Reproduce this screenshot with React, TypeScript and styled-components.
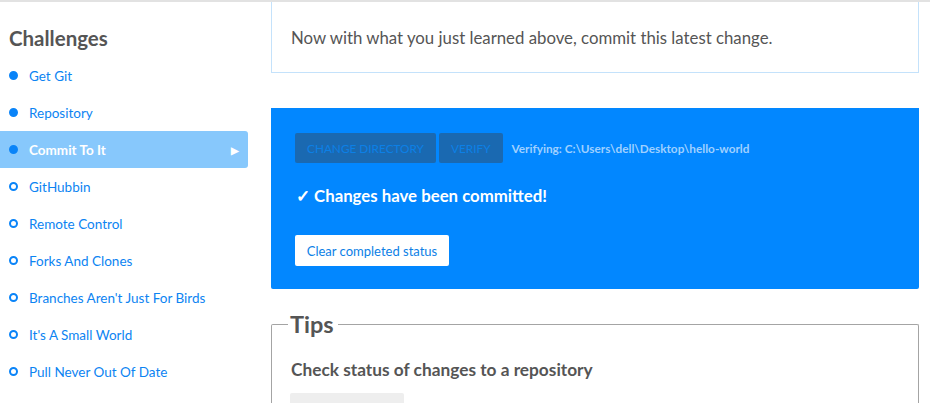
import React from 'react';
import styled, { createGlobalStyle } from 'styled-components';

const GlobalStyle = createGlobalStyle`
    html, body {
        margin: 0;
        padding: 0;
        background: #fff;
        font-family: Lato, "Noto Sans", sans-serif;
        overflow: hidden;
    }
`

const Page = styled.div`
    width: 930px;
    height: 403px;
    border-top: 2px solid #e2e2e2;
    box-sizing: border-box;
    display: flex;
    align-items: flex-start;
`

const Sidebar = styled.nav`
    width: 248px;
    flex-shrink: 0;
    padding-top: 24px;
`

const SideTitle = styled.h2`
    margin: 0 0 0 9px;
    height: 31px;
    font-size: 20.5px;
    font-weight: 700;
    color: #555;
`

const ChallengeList = styled.ul`
    list-style: none;
    margin: 0;
    padding: 0;
`

const Challenge = styled.li<{ $active?: boolean }>`
    display: flex;
    align-items: center;
    height: 37px;
    padding-left: 9px;
    font-size: 13.5px;
    color: ${props => props.$active ? '#fff' : '#0c84f2'};
    font-weight: ${props => props.$active ? 700 : 400};
    background: ${props => props.$active ? '#87c8fc' : 'transparent'};
    border-radius: 0 3px 3px 0;
`

const Dot = styled.span<{ $done?: boolean }>`
    width: 9px;
    height: 9px;
    box-sizing: border-box;
    border-radius: 50%;
    border: 2px solid #0a84f8;
    background: ${props => props.$done ? '#0a84f8' : 'transparent'};
    margin-right: 11px;
    flex-shrink: 0;
`

const Arrow = styled.span`
    margin-left: auto;
    margin-right: 9px;
    font-size: 10px;
    color: #fff;
`

const Main = styled.main`
    width: 648px;
    margin-left: 23px;
    display: flex;
    flex-direction: column;
`

const IntroCard = styled.div`
    border: 1px solid #c4e2fb;
    border-top: none;
    height: 71px;
    box-sizing: border-box;
    padding: 0 19px;
    display: flex;
    align-items: center;
    font-size: 16.8px;
    color: #555;
`

const VerifyPanel = styled.section`
    margin-top: 35px;
    height: 181px;
    box-sizing: border-box;
    background: #0287ff;
    border-radius: 0 0 2px 2px;
    padding: 25px 24px;
`

const ToolRow = styled.div`
    display: flex;
    align-items: center;
    gap: 3px;
`

const DimButton = styled.button`
    height: 30px;
    padding: 0 12px;
    border: none;
    border-radius: 2px;
    background: #1a69b1;
    color: #0c80e6;
    font-family: inherit;
    font-size: 11.8px;
    text-transform: uppercase;
`

const VerifyPath = styled.span`
    margin-left: 6px;
    font-size: 11.8px;
    font-weight: 700;
    color: #9fd0ff;
`

const Done = styled.p`
    margin: 22px 0 0 1px;
    font-size: 16.8px;
    font-weight: 700;
    color: #fff;
`

const ClearButton = styled.button`
    margin-top: 29px;
    height: 31px;
    width: 154px;
    border: none;
    border-radius: 2px;
    background: #fff;
    color: #0c80e6;
    font-family: inherit;
    font-size: 13px;
`

const Tips = styled.fieldset`
    margin: 21px 0 0;
    padding: 0 19px;
    border: 1px solid #a4a4a4;
    border-bottom: none;
    border-radius: 2px 2px 0 0;
    height: 100px;
    legend {
        padding: 0 4px 0 2px;
        margin-left: -3px;
        font-size: 23.5px;
        font-weight: 700;
        color: #555;
    }
`

const TipTitle = styled.h3`
    margin: 21px 0 13px;
    font-size: 17.3px;
    font-weight: 700;
    color: #555;
`

const CodeBox = styled.div`
    width: 114px;
    height: 20px;
    margin-left: -1px;
    background: #eee;
    border-radius: 2px;
`

const challenges = [
    { name: 'Get Git', done: true },
    { name: 'Repository', done: true },
    { name: 'Commit To It', done: true, active: true },
    { name: 'GitHubbin' },
    { name: 'Remote Control' },
    { name: 'Forks And Clones' },
    { name: "Branches Aren't Just For Birds" },
    { name: "It's A Small World" },
    { name: 'Pull Never Out Of Date' },
]

const App = () => {
    return (
        <>
            <GlobalStyle />
            <Page>
                <Sidebar>
                    <SideTitle>Challenges</SideTitle>
                    <ChallengeList>
                        {challenges.map(c => (
                            <Challenge key={c.name} $active={c.active}>
                                <Dot $done={c.done} />
                                {c.name}
                                {c.active && <Arrow>▶</Arrow>}
                            </Challenge>
                        ))}
                    </ChallengeList>
                </Sidebar>
                <Main>
                    <IntroCard>Now with what you just learned above, commit this latest change.</IntroCard>
                    <VerifyPanel>
                        <ToolRow>
                            <DimButton>Change Directory</DimButton>
                            <DimButton>Verify</DimButton>
                            <VerifyPath>Verifying: C:\Users\dell\Desktop\hello-world</VerifyPath>
                        </ToolRow>
                        <Done>✓ Changes have been committed!</Done>
                        <ClearButton>Clear completed status</ClearButton>
                    </VerifyPanel>
                    <Tips>
                        <legend>Tips</legend>
                        <TipTitle>Check status of changes to a repository</TipTitle>
                        <CodeBox />
                    </Tips>
                </Main>
            </Page>
        </>
    );
};

export default App;
